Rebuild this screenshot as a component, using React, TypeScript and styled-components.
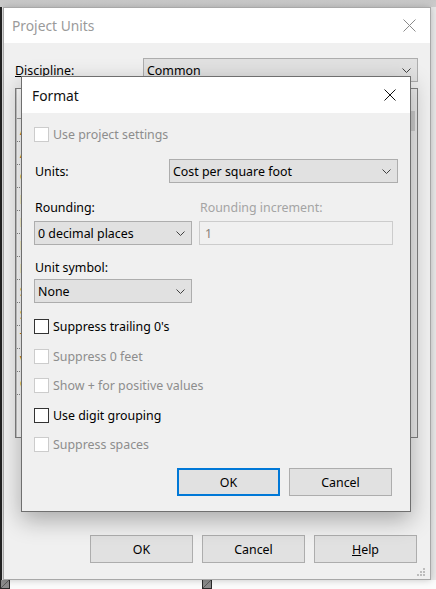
import React from 'react';
import styled, { createGlobalStyle } from 'styled-components';

const GlobalStyle = createGlobalStyle`
  html, body {
    margin: 0;
    padding: 0;
  }
  body {
    width: 436px;
    height: 589px;
    overflow: hidden;
    background: #ececec;
    font-family: "Noto Sans", "Open Sans", sans-serif;
    font-size: 12.4px;
    color: #000;
  }
  * {
    box-sizing: border-box;
  }
`;

const unitRows = [
  'Angle',
  'Area',
  'Cost per Area',
  'Distance',
  'Length',
  'Mass Density',
  'Rotation Angle',
  'Slope',
  'Speed',
  'Time',
  'Volume',
  'Currency',
];

type CheckOption = { label: string; disabled: boolean };

const checkOptions: CheckOption[] = [
  { label: "Suppress trailing 0's", disabled: false },
  { label: 'Suppress 0 feet', disabled: true },
  { label: 'Show + for positive values', disabled: true },
  { label: 'Use digit grouping', disabled: false },
  { label: 'Suppress spaces', disabled: true },
];

//small chevron used by every drop-down
const Chevron: React.FC = () => (
  <ChevronIcon width="9" height="5" viewBox="0 0 9 5">
    <path d="M0.5 0.5 L4.5 4.5 L8.5 0.5" fill="none" stroke="#404040" strokeWidth="1" />
  </ChevronIcon>
);

const CloseGlyph: React.FC<{ color: string; size: number }> = ({ color, size }) => (
  <svg width={size} height={size} viewBox={`0 0 ${size} ${size}`}>
    <path d={`M0.5 0.5 L${size - 0.5} ${size - 0.5} M${size - 0.5} 0.5 L0.5 ${size - 0.5}`} stroke={color} strokeWidth="1" />
  </svg>
);

const ComboBox: React.FC<{ value: string; width?: number }> = ({ value, width }) => (
  <Combo $width={width}>
    <ComboText>{value}</ComboText>
    <Chevron />
  </Combo>
);

const CheckBox: React.FC<CheckOption> = ({ label, disabled }) => (
  <CheckRow>
    <Box $disabled={disabled} />
    <CheckLabel $disabled={disabled}>{label}</CheckLabel>
  </CheckRow>
);

//the Format dialog that lies over Project Units
const FormatDialog: React.FC = () => (
  <FormatWindow>
    <FormatTitleBar>
      <FormatTitle>Format</FormatTitle>
      <CloseArea $width={40}>
        <CloseGlyph color="#111" size={12} />
      </CloseArea>
    </FormatTitleBar>
    <FormatBody>
      <CheckBox label="Use project settings" disabled />
      <UnitsRow>
        <UnitsLabel>Units:</UnitsLabel>
        <ComboBox value="Cost per square foot" width={229} />
      </UnitsRow>
      <PairRow $top={17}>
        <FieldLabel $width={158}>Rounding:</FieldLabel>
        <FieldLabel $width={194} $disabled>
          Rounding increment:
        </FieldLabel>
      </PairRow>
      <PairRow $top={5}>
        <ComboBox value="0 decimal places" width={158} />
        <TextBox>1</TextBox>
      </PairRow>
      <SymbolLabel>Unit symbol:</SymbolLabel>
      <SymbolCombo>
        <ComboBox value="None" width={158} />
      </SymbolCombo>
      <CheckList>
        {checkOptions.map((o) => (
          <CheckBox key={o.label} {...o} />
        ))}
      </CheckList>
      <FormatButtons>
        <DialogButton $default>OK</DialogButton>
        <DialogButton>Cancel</DialogButton>
      </FormatButtons>
    </FormatBody>
  </FormatWindow>
);

const ResizeGrip: React.FC = () => (
  <Grip width="9" height="9" viewBox="0 0 9 9">
    {[
      [6, 0],
      [3, 3],
      [6, 3],
      [0, 6],
      [3, 6],
      [6, 6],
    ].map(([x, y]) => (
      <rect key={`${x}-${y}`} x={x} y={y} width="2" height="2" fill="#bdbdbd" />
    ))}
  </Grip>
);

const App: React.FC = () => (
  <>
    <GlobalStyle />
    <Desktop>
      <Stage>
        <LeftEdge />
        <Window>
          <TitleBar>
            <WindowTitle>Project Units</WindowTitle>
            <CloseArea $width={42}>
              <CloseGlyph color="#8a8a8a" size={13} />
            </CloseArea>
          </TitleBar>
          <WindowBody>
            <DisciplineRow>
              <DisciplineLabel>
                <u>D</u>iscipline:
              </DisciplineLabel>
              <ComboBox value="Common" />
            </DisciplineRow>
            <UnitsTable>
              <TableGrid>
                <HeaderRow />
                {unitRows.map((r) => (
                  <TableRow key={r}>{r}</TableRow>
                ))}
              </TableGrid>
              <ScrollTrack>
                <ScrollThumb />
              </ScrollTrack>
            </UnitsTable>
            <WindowButtons>
              <DialogButton>OK</DialogButton>
              <DialogButton>Cancel</DialogButton>
              <DialogButton>
                <u>H</u>elp
              </DialogButton>
            </WindowButtons>
          </WindowBody>
          <ResizeGrip />
          <FormatDialog />
        </Window>
      </Stage>
      <BottomStrip>
        <Splitter />
        <Splitter $offset={192} />
      </BottomStrip>
    </Desktop>
  </>
);

const Desktop = styled.div`
  width: 436px;
  height: 589px;
  display: flex;
  flex-direction: column;
  padding-top: 7px;
  background: linear-gradient(to bottom, #c7c7c7 0, #cfcfcf 7px, #e9e9e9 7px);
`;
const Stage = styled.div`
  display: flex;
  height: 573px;
`;
const LeftEdge = styled.div`
  width: 2px;
  margin-right: 1px;
  background: #242424;
`;
const Window = styled.div`
  position: relative;
  width: 428px;
  height: 573px;
  display: flex;
  flex-direction: column;
  background: #f0f0f0;
  border: 1px solid #a8a8a8;
  box-shadow: 0 0 7px rgba(0, 0, 0, 0.22);
`;
const TitleBar = styled.div`
  height: 35px;
  display: flex;
  align-items: center;
  background: #fff;
  padding-left: 8px;
`;
const WindowTitle = styled.div`
  font-size: 13.8px;
  color: #9a9a9a;
`;
const CloseArea = styled.div<{ $width: number }>`
  margin-left: auto;
  width: ${(p) => p.$width}px;
  height: 100%;
  display: flex;
  align-items: center;
  justify-content: center;
`;
const WindowBody = styled.div`
  flex: 1;
  display: flex;
  flex-direction: column;
  padding: 15px 12px 16px 11px;
`;
const DisciplineRow = styled.div`
  display: flex;
  align-items: center;
  height: 24px;
`;
const DisciplineLabel = styled.div`
  width: 128px;
  flex-shrink: 0;
`;
const UnitsTable = styled.div`
  margin-top: 6px;
  height: 350px;
  display: flex;
  background: #fff;
  border: 1px solid #828282;
`;
const TableGrid = styled.div`
  flex: 1;
  display: flex;
  flex-direction: column;
  border-left: 1px solid #c8c8c8;
`;
const HeaderRow = styled.div`
  height: 30px;
  border-bottom: 1px solid #a0a0a0;
`;
const TableRow = styled.div`
  height: 23px;
  display: flex;
  align-items: center;
  padding-left: 3px;
  color: #b06a00;
  border-bottom: 1px dotted #8a8a8a;
`;
const ScrollTrack = styled.div`
  width: 17px;
  background: #ececec;
  border-left: 1px solid #e0e0e0;
  padding: 22px 2px 0;
`;
const ScrollThumb = styled.div`
  height: 20px;
  background: #cdcdcd;
`;
const WindowButtons = styled.div`
  margin-top: auto;
  display: flex;
  justify-content: flex-end;
  gap: 9px;
  padding-right: 1px;
`;
const DialogButton = styled.div<{ $default?: boolean }>`
  width: 103px;
  height: 28px;
  flex-shrink: 0;
  display: flex;
  align-items: center;
  justify-content: center;
  background: #e1e1e1;
  border: ${(p) => (p.$default ? '2px solid #0078d7' : '1px solid #adadad')};
`;
const Grip = styled.svg`
  position: absolute;
  right: 4px;
  bottom: 2px;
`;
const BottomStrip = styled.div`
  flex: 1;
  display: flex;
  background: #fbfbfb;
`;
const Splitter = styled.div<{ $offset?: number }>`
  width: 10px;
  margin-left: ${(p) => p.$offset ?? 0}px;
  background: linear-gradient(135deg, #8c8c8c 45%, #5a5a5a 50%, #8c8c8c 55%);
  border: 1px solid #2a2a2a;
  border-top: none;
`;

const FormatWindow = styled.div`
  position: absolute;
  left: 17px;
  top: 68px;
  width: 390px;
  height: 436px;
  display: flex;
  flex-direction: column;
  background: #f0f0f0;
  border: 1px solid #6f6f6f;
  box-shadow: 0 8px 22px rgba(0, 0, 0, 0.3);
`;
const FormatTitleBar = styled.div`
  height: 36px;
  display: flex;
  align-items: center;
  background: #fff;
  padding-left: 10px;
`;
const FormatTitle = styled.div`
  font-size: 13.8px;
  color: #111;
`;
const FormatBody = styled.div`
  flex: 1;
  display: flex;
  flex-direction: column;
  padding: 14px 10px 15px 12px;
`;
const CheckRow = styled.div`
  height: 15px;
  display: flex;
  align-items: center;
`;
const Box = styled.div<{ $disabled: boolean }>`
  width: 15px;
  height: 15px;
  flex-shrink: 0;
  background: #fff;
  border: 1px solid ${(p) => (p.$disabled ? '#cccccc' : '#333333')};
`;
const CheckLabel = styled.span<{ $disabled: boolean }>`
  margin-left: 4px;
  color: ${(p) => (p.$disabled ? '#8d8d8d' : '#000')};
  white-space: nowrap;
`;
const UnitsRow = styled.div`
  margin-top: 17px;
  display: flex;
  align-items: center;
`;
const UnitsLabel = styled.div`
  width: 135px;
  flex-shrink: 0;
  padding-left: 1px;
`;
const PairRow = styled.div<{ $top: number }>`
  margin-top: ${(p) => p.$top}px;
  display: flex;
  gap: 7px;
`;
const FieldLabel = styled.div<{ $width: number; $disabled?: boolean }>`
  width: ${(p) => p.$width}px;
  flex-shrink: 0;
  line-height: 16px;
  padding-left: 1px;
  color: ${(p) => (p.$disabled ? '#a4a4a4' : '#000')};
`;
const SymbolLabel = styled.div`
  margin-top: 15px;
  line-height: 16px;
  padding-left: 1px;
`;
const SymbolCombo = styled.div`
  margin-top: 3px;
`;
const Combo = styled.div<{ $width?: number }>`
  ${(p) => (p.$width ? `width: ${p.$width}px; flex-shrink: 0;` : 'flex: 1;')}
  height: 24px;
  display: flex;
  align-items: center;
  padding: 0 6px 0 3px;
  background: #e1e1e1;
  border: 1px solid #adadad;
`;
const ComboText = styled.span`
  flex: 1;
  white-space: nowrap;
`;
const ChevronIcon = styled.svg`
  flex-shrink: 0;
`;
const TextBox = styled.div`
  width: 194px;
  height: 24px;
  flex-shrink: 0;
  display: flex;
  align-items: center;
  padding-left: 5px;
  color: #8a8078;
  background: #f0f0f0;
  border: 1px solid #cccccc;
`;
const CheckList = styled.div`
  margin-top: 16px;
  display: flex;
  flex-direction: column;
  gap: 14.5px;
`;
const FormatButtons = styled.div`
  margin-top: auto;
  display: flex;
  justify-content: flex-end;
  gap: 9px;
  padding-right: 8px;
`;

export default App;
